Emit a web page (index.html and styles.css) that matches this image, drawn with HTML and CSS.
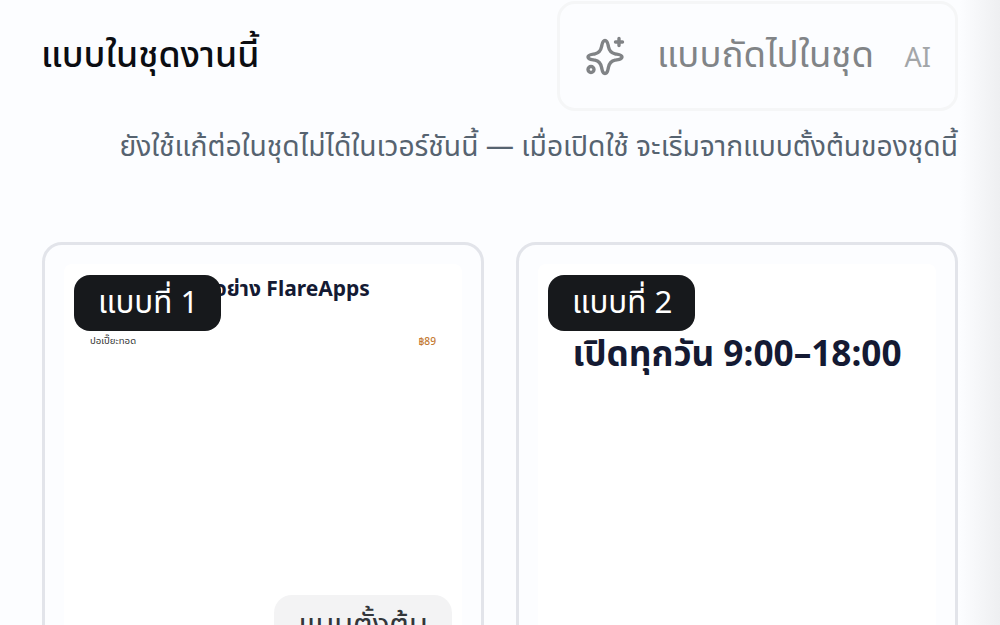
FILE: index.html
```
<!DOCTYPE html>
<html lang="th">
<head>
<meta charset="utf-8">
<title>แบบในชุดงานนี้</title>
<link rel="stylesheet" href="styles.css">
</head>
<body>
<main class="page">
  <header class="head">
    <h1 class="title">แบบในชุดงานนี้</h1>
    <button class="next" type="button" disabled>
      <svg class="spark" viewBox="0 -1.5 40 40" fill="none" stroke="currentColor" stroke-width="3.4" stroke-linecap="round" stroke-linejoin="round">
        <path d="M20 3C22.500 3 22.800 6 23.400 9C24.300 13.500 26 15.500 30 16.300C33 16.900 37 17 37 19.500C37 22 33 22.100 30 22.700C26 23.500 24.300 25.500 23.400 30C22.800 33 22.500 36 20 36C17.500 36 17.200 33 16.600 30C15.700 25.500 14 23.500 10 22.700C7 22.100 3 22 3 19.500C3 17 7 16.900 10 16.300C14 15.500 15.700 13.500 16.600 9C17.200 6 17.500 3 20 3Z"/>
        <path d="M34 1v7M30.500 4.500h7"/>
        <circle cx="6" cy="32" r="3"/>
      </svg>
      <span class="next-label">แบบถัดไปในชุด</span>
      <span class="next-ai">AI</span>
    </button>
  </header>
  <p class="note">ยังใช้แก้ต่อในชุดไม่ได้ในเวอร์ชันนี้ — เมื่อเปิดใช้ จะเริ่มจากแบบตั้งต้นของชุดนี้</p>
  <section class="cards">
    <article class="card">
      <div class="preview preview-menu">
        <h2 class="menu-title">ร้านตัวอย่าง FlareApps</h2>
        <div class="menu-row"><span>ปอเปี๊ยะทอด</span><span class="price">฿89</span></div>
        <div class="spacer"></div>
        <div class="default-wrap"><span class="default-tag">แบบตั้งต้น</span></div>
      </div>
      <span class="badge">แบบที่ 1</span>
    </article>
    <article class="card">
      <div class="preview preview-hours">
        <h2 class="hours">เปิดทุกวัน 9:00–18:00</h2>
      </div>
      <span class="badge">แบบที่ 2</span>
    </article>
  </section>
</main>
<div class="edge"></div>
</body>
</html>
```
FILE: styles.css
```
* { box-sizing: border-box; }
html, body {
  margin: 0;
  height: 625px;
  overflow: hidden;
}
body {
  position: relative;
  background: #fcfdff;
  font-family: "Noto Sans", "Noto Sans Thai", "Noto Sans CJK SC", sans-serif;
}
.page {
  padding: 1px 42px 0;
  height: 625px;
}
.head {
  display: flex;
  justify-content: space-between;
  align-items: flex-start;
}
.title {
  margin: 30px 0 0 -1px;
  font-size: 35.700px;
  line-height: 44px;
  font-weight: 500;
  color: #0b0d12;
}
.next {
  width: 401px;
  height: 110px;
  display: flex;
  align-items: center;
  padding: 0 24px 0 25px;
  background: #fcfdff;
  border: 3px solid #f5f6f7;
  border-radius: 18px;
  font: inherit;
  color: #7c8084;
}
.spark {
  width: 40px;
  height: 40px;
  flex: none;
  color: #808386;
}
.next-label {
  margin: 0 0 6px 32px;
  font-size: 36.500px;
  line-height: 44px;
  color: #818487;
}
.next-ai {
  margin-left: auto;
  font-size: 27px;
  color: #a3a6a9;
}
.note {
  margin: 14px 0 0;
  font-size: 28.200px;
  line-height: 40px;
  text-align: right;
  color: #566370;
  white-space: nowrap;
}
.cards {
  margin-top: 77px;
  display: grid;
  grid-template-columns: 442px 442px;
  gap: 32px;
}
.card {
  position: relative;
  height: 520px;
  padding: 19px;
  border: 3px solid #e2e4ea;
  border-radius: 20px;
  background: #fcfdff;
}
.preview {
  height: 100%;
  background: #fff;
  border-radius: 8px;
  display: flex;
  flex-direction: column;
}
.badge {
  position: absolute;
  left: 29px;
  top: 30px;
  padding: 0 23px 0 24px;
  height: 56px;
  display: flex;
  align-items: center;
  background: #17191c;
  color: #fff;
  border-radius: 16px;
  font-size: 31.300px;
}
.preview-menu { padding: 8px 26px 0; }
.menu-title {
  margin: 0;
  font-size: 21px;
  line-height: 32px;
  font-weight: 700;
  color: #141a33;
  text-align: center;
}
.menu-row {
  margin-top: 30px;
  display: flex;
  justify-content: space-between;
  font-size: 9.600px;
  line-height: 14px;
  color: #333;
}
.price { color: #c47a33; font-weight: 500; font-size: 10.200px; }
.spacer { height: 247px; flex: none; }
.default-wrap { display: flex; justify-content: flex-end; margin-right: -16px; }
.default-tag {
  padding: 0 24px;
  height: 60px;
  display: flex;
  align-items: center;
  background: #f3f3f4;
  border-radius: 18px;
  font-size: 31px;
  color: #33363a;
}
.preview-hours { padding: 63px 0 0; }
.hours {
  margin: 0;
  font-size: 35.200px;
  line-height: 50px;
  font-weight: 700;
  color: #141a33;
  text-align: center;
}
.edge {
  position: absolute;
  top: 0;
  right: 0;
  width: 40px;
  height: 625px;
  background: linear-gradient(to right, rgba(240,241,243,0), #eeeff1);
}
```
